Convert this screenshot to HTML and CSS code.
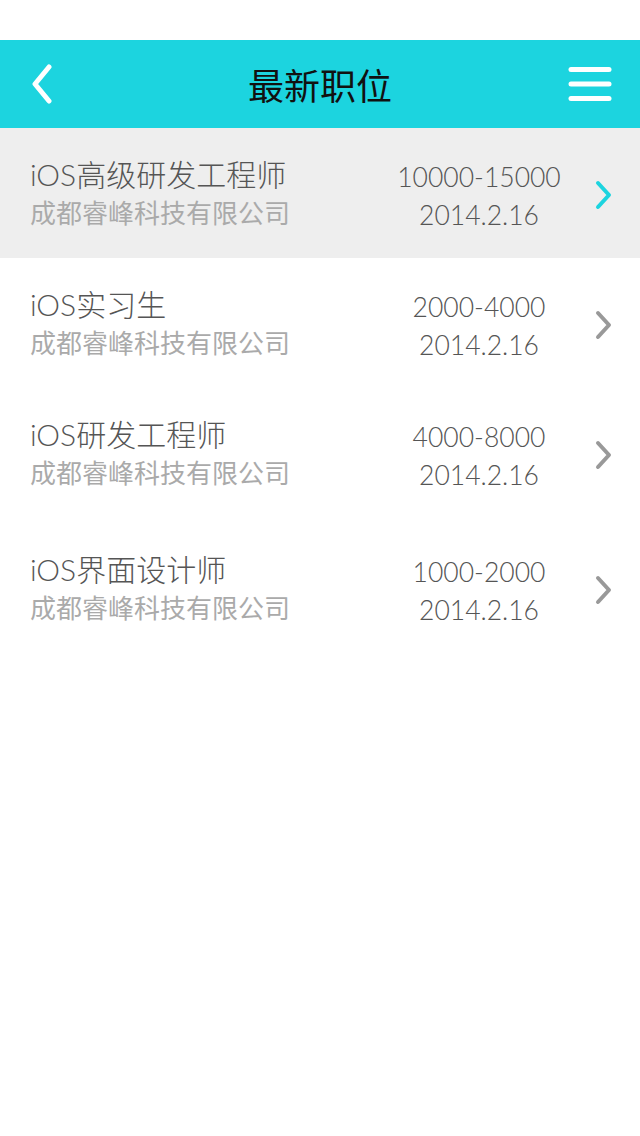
FILE: index.html
```html
<!DOCTYPE html>
<html lang="zh-CN">
<head>
<meta charset="utf-8">
<title>最新职位</title>
<link rel="stylesheet" href="styles.css">
</head>
<body>
<div class="status"></div>
<header class="nav">
  <svg class="back" width="30" height="40" viewBox="0 0 30 40"><polyline points="17,3 3,20 17,37" fill="none" stroke="#fff" stroke-width="5" stroke-linecap="round" stroke-linejoin="round"/></svg>
  <h1 class="nav-title">最新职位</h1>
  <svg class="menu" width="44" height="36" viewBox="0 0 44 36"><g stroke="#fff" stroke-width="5" stroke-linecap="round"><line x1="3" y1="3.5" x2="41" y2="3.5"/><line x1="3" y1="18" x2="41" y2="18"/><line x1="3" y1="32.5" x2="41" y2="32.5"/></g></svg>
</header>
<ul class="list">
  <li class="row active">
    <div class="info"><div class="title">iOS高级研发工程师</div><div class="company">成都睿峰科技有限公司</div></div>
    <div class="meta"><div>10000-15000</div><div>2014.2.16</div></div>
    <svg class="arrow" width="20" height="30" viewBox="0 0 20 30"><polyline points="4,3 15,15 4,27" fill="none" stroke-width="4" stroke-linecap="round" stroke-linejoin="round"/></svg>
  </li>
  <li class="row">
    <div class="info"><div class="title">iOS实习生</div><div class="company">成都睿峰科技有限公司</div></div>
    <div class="meta"><div>2000-4000</div><div>2014.2.16</div></div>
    <svg class="arrow" width="20" height="30" viewBox="0 0 20 30"><polyline points="4,3 15,15 4,27" fill="none" stroke-width="4" stroke-linecap="round" stroke-linejoin="round"/></svg>
  </li>
  <li class="row">
    <div class="info"><div class="title">iOS研发工程师</div><div class="company">成都睿峰科技有限公司</div></div>
    <div class="meta"><div>4000-8000</div><div>2014.2.16</div></div>
    <svg class="arrow" width="20" height="30" viewBox="0 0 20 30"><polyline points="4,3 15,15 4,27" fill="none" stroke-width="4" stroke-linecap="round" stroke-linejoin="round"/></svg>
  </li>
  <li class="row tall">
    <div class="info"><div class="title">iOS界面设计师</div><div class="company">成都睿峰科技有限公司</div></div>
    <div class="meta"><div>1000-2000</div><div>2014.2.16</div></div>
    <svg class="arrow" width="20" height="30" viewBox="0 0 20 30"><polyline points="4,3 15,15 4,27" fill="none" stroke-width="4" stroke-linecap="round" stroke-linejoin="round"/></svg>
  </li>
</ul>
</body>
</html>
```
FILE: styles.css
```css
* { box-sizing: border-box; }
html, body { margin: 0; padding: 0; background: #fff; }
body {
  font-family: Lato, "Noto Sans CJK SC", sans-serif;
  width: 640px;
  height: 1136px;
}
.status { height: 40px; background: #fff; }
.nav {
  height: 88px;
  background: #1cd4df;
  display: flex;
  align-items: center;
  justify-content: space-between;
  padding: 0 28px 0 32px;
}
.back { display: block; }
.menu { display: block; }
.nav-title {
  margin: 0 0 0 10px;
  font-family: "Noto Sans CJK SC", sans-serif;
  font-weight: 400;
  font-size: 36px;
  color: #111;
  line-height: 1;
}
.list { list-style: none; margin: 0; padding: 0; }
.row {
  height: 130px;
  display: flex;
  align-items: center;
  padding-left: 30px;
}
.row.tall { height: 140px; }
.row.active { background: #eeeeee; }
.info { flex: 1; display: flex; flex-direction: column; }
.title {
  font-size: 30px;
  line-height: 38px;
  color: #555;
  font-weight: 300;
}
.company {
  font-size: 26px;
  line-height: 38px;
  color: #aaa;
  font-family: "Noto Sans CJK SC", sans-serif;
  font-weight: 400;
}
.meta {
  width: 190px;
  text-align: center;
  font-size: 26.5px;
  font-weight: 300;
  line-height: 38px;
  color: #555;
  margin-right: 20px;
  padding-top: 6px;
}
.arrow { display: block; margin: 4px 26px 0 0; stroke: #999; }
.active .arrow { stroke: #1cd4df; }
```
